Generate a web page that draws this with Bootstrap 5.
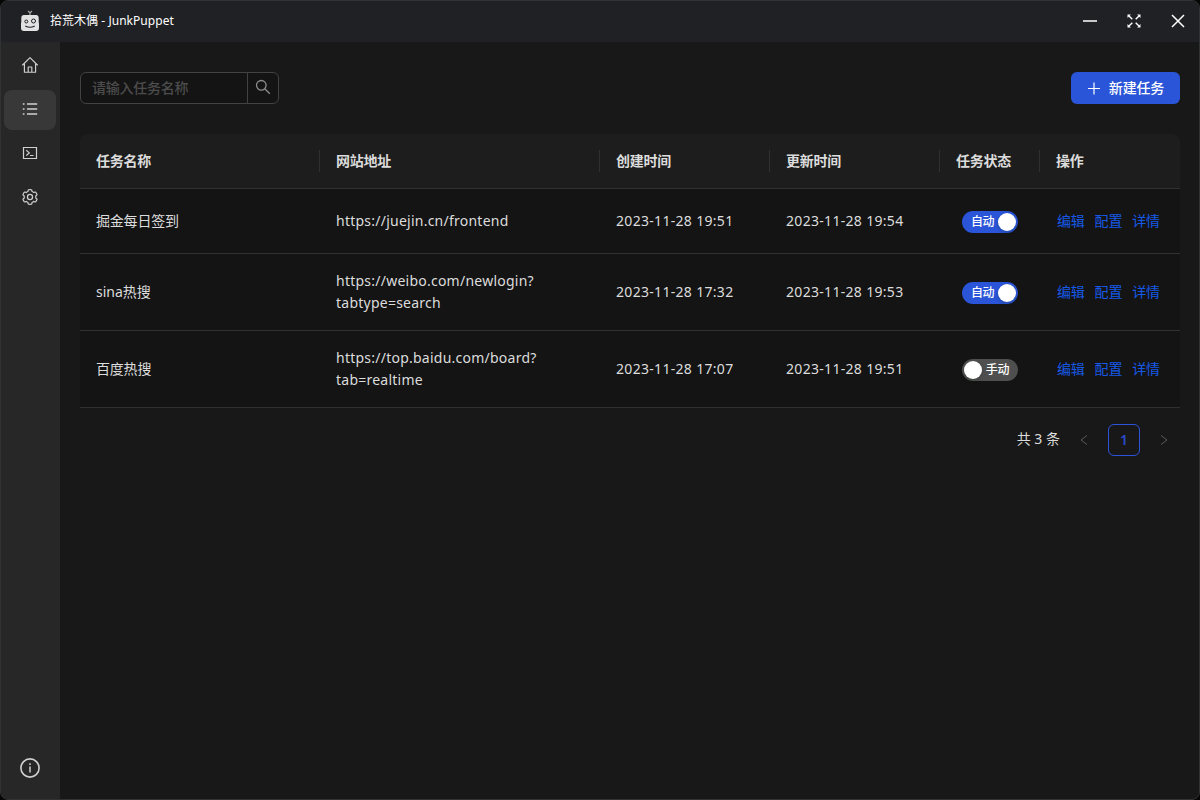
<!DOCTYPE html>
<html lang="zh-CN">
<head>
<meta charset="utf-8">
<meta name="viewport" content="width=device-width, initial-scale=1">
<title>拾荒木偶 - JunkPuppet</title>
<link rel="stylesheet" href="https://cdn.jsdelivr.net/npm/bootstrap@5.3.0/dist/css/bootstrap.min.css">
<style>
body{background:#060606;color:#dcdcdc;font-family:"Noto Sans","Noto Sans CJK SC",sans-serif;font-size:14px;line-height:22px}
svg{display:block;fill:none;stroke:currentColor}
.window{height:800px;background:#181818;border:1px solid #303234;border-radius:8px}
.titlebar{height:41px;background:#202124;padding:0 13px 2px 19px;color:#fff;font-size:12px}
.titlebar .controls{gap:28px}
.sidebar{width:59px;background:#272727;padding:4px 4px 11px 3px;color:#d0d0d0}
.sidebar a{height:40px;border-radius:8px;color:inherit}
.sidebar a:not(.mt-auto){padding-bottom:2px}
.sidebar a.active{background:#383838}
.content{padding:30px 19px 0 20px}
.search{width:199px;height:32px}
.search .form-control,.search .btn{background:#141414;border:1px solid #424242;border-radius:6px;font-size:14px;line-height:22px;padding:0 11px;box-shadow:none}
.search .form-control{letter-spacing:-.25px;font-weight:500}
.search .form-control::placeholder{color:#4c4c4c;opacity:1}
.search .btn{width:32px;padding:0 7px 2px;color:#8c8c8c}
.create{height:32px;width:109px;background:#2b55d8;border:0;border-radius:6px;color:#fff;font-size:14px;font-weight:500;letter-spacing:-.15px;padding:0 0 1px;gap:8px}
.create:hover{background:#3c64e0;color:#fff}
.tasks{table-layout:fixed;border-collapse:separate;border-spacing:0;margin:30px 0 16px;color:#dcdcdc;--bs-table-bg:#141414;--bs-table-color:#dcdcdc}
.tasks>:not(caption)>*>*{padding:16px;border-bottom:1px solid #303030;color:#dcdcdc}
.tasks>thead>tr>th{background:#1d1d1d;font-weight:700;letter-spacing:-.25px;position:relative}
.tasks th:first-child{border-top-left-radius:8px}
.tasks th:last-child{border-top-right-radius:8px}
.tasks th:not(:last-child)::after{content:"";position:absolute;right:0;top:16px;height:22px;width:1px;background:#303030}
.tasks .first td{height:65px}
.title{letter-spacing:-.2px}
.url{letter-spacing:.24px}
.stamp{letter-spacing:.31px;white-space:nowrap}
.toggle{width:56px;height:22px;border-radius:11px;background:#4f4f4f;padding:2px 9px 2px 2px;color:#fff;font-size:12px;font-weight:500;letter-spacing:-.4px;position:relative;top:1px}
.toggle.on{background:#2b55d8;padding:2px 2px 2px 9px}
.toggle i{width:18px;height:18px;border-radius:50%;background:#fff;box-shadow:0 2px 4px #00230b33}
.actions{gap:10px;padding-left:1px;white-space:nowrap;letter-spacing:-.2px}
.actions a{color:#1659e6;text-decoration:none}
.pager{gap:8px;color:#5a5a5a}
.pager .total{color:#dcdcdc;position:relative;top:-1px}
.pager a{width:32px;height:32px;color:inherit;text-decoration:none}
.pager .current{border:1px solid #2b55d8;border-radius:6px;color:#2b4acb;font-weight:600}
</style>
<script src="https://cdn.jsdelivr.net/npm/bootstrap@5.3.0/dist/js/bootstrap.bundle.min.js" defer></script>
</head>
<body>
<div class="window d-flex flex-column overflow-hidden">
  <header class="titlebar d-flex align-items-center justify-content-between">
    <div class="d-flex align-items-center" style="gap:10px">
      <svg width="20" height="22" viewBox="0 0 20 22">
        <path d="M8 1l2 2 2-2M10 3v3" stroke="#aaa" stroke-width="1.2"/>
        <path d="M4 5h12q2.7 0 2.7 3v4q.3 1 .3 2v4q0 3-3 3H4q-3 0-3-3v-4q0-1 .3-2V8Q1.300 5 4 5z" fill="#e2e2e2" stroke="none"/>
        <g stroke="#202124"><circle cx="6.300" cy="11.500" r="1.500"/><circle cx="13.500" cy="11" r="2"/><path d="M5.300 16q4.700 2.500 9.400 0" stroke-width="1.200"/></g>
      </svg>
      <span style="letter-spacing:.04px">拾荒木偶 - JunkPuppet</span>
    </div>
    <div class="controls d-flex align-items-center">
      <svg width="16" height="16" viewBox="0 0 16 16"><path d="M1 8h14" stroke="#c8c8c8" stroke-width="2"/></svg>
      <svg width="16" height="16" viewBox="0 0 16 16"><path d="M3 3l3.300 3.300M13 3L9.700 6.300M13 13L9.700 9.700M3 13l3.300-3.300" stroke-width="1.400"/><path d="M1.500 1.500h3.400L1.500 4.900zM14.500 1.500v3.400L11.100 1.500zM14.500 14.500h-3.400l3.400-3.400zM1.500 14.500v-3.400l3.400 3.400z" fill="currentColor" stroke="none"/></svg>
      <svg width="16" height="16" viewBox="0 0 16 16"><path d="M2 2l12 12M14 2L2 14" stroke-width="1.500"/></svg>
    </div>
  </header>
  <div class="d-flex flex-fill">
    <nav class="sidebar d-flex flex-column gap-1 flex-shrink-0">
      <a href="#" class="d-flex align-items-center justify-content-center"><svg width="18" height="18" viewBox="0 0 18 18" stroke-width="1.150"><path d="M1.600 9L9 1.700 16.400 9M3.400 8v8.200h11.200V8M7.200 16v-5h3.600v5" stroke-linejoin="round" stroke-linecap="round"/></svg></a>
      <a href="#" class="active d-flex align-items-center justify-content-center"><svg width="16" height="16" viewBox="0 0 16 16" stroke-width="1.500"><path d="M5 3h10.200M5 8h10.200M5 13h10.200"/><path d="M.8 3h1.700M.8 8h1.700M.8 13h1.700" stroke-width="1.700"/></svg></a>
      <a href="#" class="d-flex align-items-center justify-content-center"><svg width="16" height="16" viewBox="0 0 16 16" stroke-width="1.200"><path d="M1.500 2.500h13v11h-13zM4.300 5.200L7.300 7.900 4.300 10.500M8 10.500h3.500"/></svg></a>
      <a href="#" class="d-flex align-items-center justify-content-center"><svg width="18" height="18" viewBox="0 0 1024 1024" stroke-width="72"><path transform="translate(31 31) scale(.94)" d="M924.8 625.7l-65.5-56c3.1-19 4.7-38.4 4.7-57.8s-1.6-38.8-4.7-57.8l65.5-56a32 32 0 009.3-35.2l-.9-2.6a443.7 443.7 0 00-79.7-137.9l-1.8-2.1a32 32 0 00-35.1-9.5l-81.3 28.9c-30-24.6-63.5-44-99.7-57.6l-15.7-85a32 32 0 00-25.8-25.7l-2.7-.5c-52.1-9.4-106.9-9.4-159 0l-2.7.5a32 32 0 00-25.8 25.7l-15.8 85.4a351.9 351.9 0 00-99 57.4l-81.9-29.1a32 32 0 00-35.1 9.5l-1.8 2.1a446 446 0 00-79.7 137.9l-.9 2.6c-4.5 12.5-.8 26.5 9.3 35.2l66.3 56.6c-3.1 18.8-4.6 38-4.6 57.1 0 19.2 1.5 38.4 4.6 57.1L99 625.5a32 32 0 00-9.3 35.2l.9 2.6c18.1 50.4 44.9 96.9 79.7 137.9l1.8 2.1a32 32 0 0035.1 9.5l81.9-29.1c29.8 24.5 63.1 43.9 99 57.4l15.8 85.4a32 32 0 0025.8 25.7l2.7.5a449.4 449.4 0 00159 0l2.7-.5a32 32 0 0025.8-25.7l15.7-85a350 350 0 0099.7-57.6l81.3 28.9a32 32 0 0035.1-9.5l1.8-2.1c34.8-41.1 61.6-87.5 79.7-137.9l.9-2.6c4.5-12.3.8-26.3-9.3-35z"/><circle cx="512" cy="512" r="145"/></svg></a>
      <a href="#" class="mt-auto d-flex align-items-center justify-content-center"><svg width="20" height="20" viewBox="0 0 20 20"><circle cx="10" cy="10" r="9.100" stroke-width="1.600"/><path d="M10 8.500v6M10 5.300V7" stroke-width="1.500"/></svg></a>
    </nav>
    <main class="content flex-fill">
      <div class="d-flex justify-content-between">
        <div class="search input-group flex-nowrap">
          <input class="form-control" type="text" placeholder="请输入任务名称" aria-label="任务名称">
          <button class="btn" type="button" aria-label="搜索"><svg width="16" height="16" viewBox="0 0 16 16" stroke-width="1.300"><circle cx="6.300" cy="6.300" r="4.800"/><path d="M9.800 9.800l5 5"/></svg></button>
        </div>
        <button class="create btn d-flex align-items-center justify-content-center" type="button"><svg width="14" height="14" viewBox="0 0 14 14"><path d="M1 7.500h12M7 1.500v12" stroke-width="1.200"/></svg>新建任务</button>
      </div>
      <table class="tasks table align-middle">
        <colgroup><col style="width:240px"><col style="width:280px"><col style="width:170px"><col style="width:170px"><col style="width:100px"><col style="width:140px"></colgroup>
        <thead><tr><th>任务名称</th><th>网站地址</th><th>创建时间</th><th>更新时间</th><th>任务状态</th><th>操作</th></tr></thead>
        <tbody>
          <tr class="first"><td class="title">掘金每日签到</td><td class="url">https://juejin.cn/frontend</td><td class="stamp">2023-11-28 19:51</td><td class="stamp">2023-11-28 19:54</td>
            <td class="py-0"><div class="toggle on d-flex align-items-center justify-content-between mx-auto">自动<i></i></div></td>
            <td><div class="actions d-flex"><a href="#">编辑</a><a href="#">配置</a><a href="#">详情</a></div></td></tr>
          <tr><td>sina热搜</td><td class="url">https://weibo.com/newlogin?<br>tabtype=search</td><td class="stamp">2023-11-28 17:32</td><td class="stamp">2023-11-28 19:53</td>
            <td class="py-0"><div class="toggle on d-flex align-items-center justify-content-between mx-auto">自动<i></i></div></td>
            <td><div class="actions d-flex"><a href="#">编辑</a><a href="#">配置</a><a href="#">详情</a></div></td></tr>
          <tr><td class="title">百度热搜</td><td class="url">https://top.baidu.com/board?<br>tab=realtime</td><td class="stamp">2023-11-28 17:07</td><td class="stamp">2023-11-28 19:51</td>
            <td class="py-0"><div class="toggle d-flex align-items-center justify-content-between mx-auto"><i></i>手动</div></td>
            <td><div class="actions d-flex"><a href="#">编辑</a><a href="#">配置</a><a href="#">详情</a></div></td></tr>
        </tbody>
      </table>
      <div class="pager d-flex justify-content-end align-items-center">
        <span class="total">共 3 条</span>
        <a href="#" class="d-flex align-items-center justify-content-center" aria-label="上一页"><svg width="12" height="12" viewBox="0 0 12 12"><path d="M9 1.500L3 6l6 4.500"/></svg></a>
        <a href="#" class="current d-flex align-items-center justify-content-center">1</a>
        <a href="#" class="d-flex align-items-center justify-content-center" aria-label="下一页"><svg width="12" height="12" viewBox="0 0 12 12"><path d="M3 1.500L9 6l-6 4.500"/></svg></a>
      </div>
    </main>
  </div>
</div>
</body>
</html>
